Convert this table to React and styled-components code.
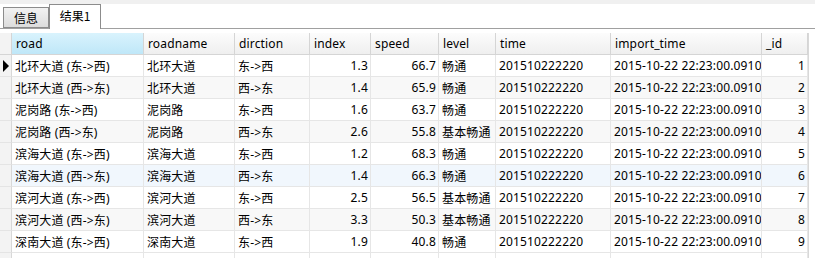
import React from 'react';
import styled, { createGlobalStyle } from 'styled-components';

const GlobalStyle = createGlobalStyle`
  body {
    margin: 0;
    background: #fff;
    font-family: "Noto Sans", "Noto Sans CJK SC", sans-serif;
  }
`;

const columns = [
  { key: 'road', title: 'road', width: 132 },
  { key: 'roadname', title: 'roadname', width: 91 },
  { key: 'dir', title: 'dirction', width: 75 },
  { key: 'index', title: 'index', width: 61, right: true },
  { key: 'speed', title: 'speed', width: 68, right: true },
  { key: 'level', title: 'level', width: 57 },
  { key: 'time', title: 'time', width: 115 },
  { key: 'import', title: 'import_time', width: 151 },
  { key: 'id', title: '_id', width: 46, right: true },
];

const raw = [
  ['北环大道', '东->西', 1.3, 66.7, '畅通'],
  ['北环大道', '西->东', 1.4, 65.9, '畅通'],
  ['泥岗路', '东->西', 1.6, 63.7, '畅通'],
  ['泥岗路', '西->东', 2.6, 55.8, '基本畅通'],
  ['滨海大道', '东->西', 1.2, 68.3, '畅通'],
  ['滨海大道', '西->东', 1.4, 66.3, '畅通'],
  ['滨河大道', '东->西', 2.5, 56.5, '基本畅通'],
  ['滨河大道', '西->东', 3.3, 50.3, '基本畅通'],
  ['深南大道', '东->西', 1.9, 40.8, '畅通'],
];

const rows = raw.map(([name, dir, index, speed, level], i) => ({
  road: `${name} (${dir})`,
  roadname: name,
  dir,
  index: index.toFixed(1),
  speed: speed.toFixed(1),
  level,
  time: '201510222220',
  import: '2015-10-22 22:23:00.0910',
  id: String(i + 1),
}));

const template = `12px ${columns.map((c) => c.width + 'px').join(' ')}`;

const Page = styled.div`
  width: 815px;
  height: 258px;
  overflow: hidden;
  background: #fff;
  font-size: 12px;
  letter-spacing: 0.15px;
  color: #000;
`;

const TabBar = styled.div`
  height: 29px;
  box-sizing: border-box;
  border-top: 4px solid #f0f0f0;
  border-bottom: 1px solid #a0a0a0;
  display: flex;
  align-items: flex-end;
  padding-left: 3px;
`;

const Tab = styled.div`
  box-sizing: border-box;
  height: ${(p) => (p.active ? '25px' : '21px')};
  margin-bottom: ${(p) => (p.active ? '-1px' : '0')};
  width: ${(p) => (p.active ? '52px' : '46px')};
  border: 1px solid #8c8c8c;
  border-bottom: ${(p) => (p.active ? 'none' : '1px solid #8c8c8c')};
  background: ${(p) => (p.active ? '#fff' : 'linear-gradient(#f2f2f2, #dcdcdc)')};
  display: flex;
  align-items: center;
  justify-content: center;
  padding-bottom: ${(p) => (p.active ? '3px' : '0')};
  font-family: "Noto Sans CJK SC", sans-serif;
  font-size: 12px;
  letter-spacing: 0;
  line-height: 1;
`;

const GridWrap = styled.div`
  padding-top: 4px;
`;

const Grid = styled.div`
  display: grid;
  grid-template-columns: ${template};
  grid-auto-rows: 22px;
  width: 808px;
  border-right: 1px solid #d8d8d8;
`;

const HeaderCell = styled.div`
  box-sizing: border-box;
  border-right: 1px solid #d5d5d5;
  border-bottom: 1px solid #d5d5d5;
  background: ${(p) =>
    p.selected ? 'linear-gradient(#d9f3fd, #bfe7f8)' : 'linear-gradient(#fcfcfc, #efefef)'};
  padding-left: 4px;
  display: flex;
  align-items: center;
  white-space: nowrap;
  overflow: hidden;
`;

const Corner = styled(HeaderCell)`
  padding: 0;
  background: #f3f3f3;
`;

const RowHead = styled.div`
  box-sizing: border-box;
  background: #f3f3f3;
  border-right: 1px solid #d8d8d8;
  border-bottom: 1px solid #e4e4e4;
  display: flex;
  align-items: center;
  padding-left: 3px;
`;

const Arrow = styled.span`
  width: 0;
  height: 0;
  border-top: 6px solid transparent;
  border-bottom: 6px solid transparent;
  border-left: 6px solid #000;
`;

const Cell = styled.div`
  box-sizing: border-box;
  border-right: 1px solid #e6e6e6;
  border-bottom: 1px solid #e6e6e6;
  background: ${(p) => p.bg};
  padding: 0 ${(p) => (p.right ? '2px' : '0')} 0 ${(p) => (p.right ? '0' : '3px')};
  display: flex;
  align-items: center;
  justify-content: ${(p) => (p.right ? 'flex-end' : 'flex-start')};
  white-space: nowrap;
  overflow: hidden;
`;

const rowBg = (i) => {
  if (i === 5) return '#f1f7fd';
  return i % 2 === 0 ? '#ffffff' : '#f8f8f8';
};

export default function App() {
  return (
    <Page>
      <GlobalStyle />
      <TabBar>
        <Tab>信息</Tab>
        <Tab active>结果1</Tab>
      </TabBar>
      <GridWrap>
        <Grid>
          <Corner />
          {columns.map((c, i) => (
            <HeaderCell key={c.key} selected={i === 0}>
              {c.title}
            </HeaderCell>
          ))}
          {rows.map((r, i) => (
            <React.Fragment key={r.id}>
              <RowHead>{i === 0 && <Arrow />}</RowHead>
              {columns.map((c) => (
                <Cell key={c.key} right={c.right} bg={rowBg(i)}>
                  {r[c.key]}
                </Cell>
              ))}
            </React.Fragment>
          ))}
          <RowHead />
          {columns.map((c) => (
            <Cell key={c.key} bg="#fff" />
          ))}
        </Grid>
      </GridWrap>
    </Page>
  );
}
